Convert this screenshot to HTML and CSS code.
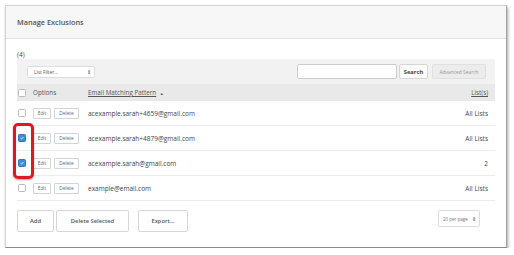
FILE: index.html
```html
<!DOCTYPE html>
<html>
<head>
<meta charset="utf-8">
<link rel="stylesheet" href="styles.css">
</head>
<body>
<div class="frame">
  <div class="head">Manage Exclusions</div>
  <div class="content">
    <div class="count">(4)</div>
    <div class="filterbar">
      <div class="select listfilter"><span>List Filter...</span><span class="arrows">&#8661;</span></div>
      <div class="spacer"></div>
      <div class="search-input"></div>
      <div class="btn search">Search</div>
      <div class="btn adv">Advanced Search</div>
    </div>
    <div class="row header">
      <div class="cb"></div>
      <div class="opts">Options</div>
      <div class="email"><span class="u">Email Matching Pattern</span> <span class="tri">&#9650;</span></div>
      <div class="lists"><span class="u">List(s)</span></div>
    </div>
    <div class="row">
      <div class="cb"></div>
      <div class="opts"><span class="sbtn edit">Edit</span><span class="sbtn">Delete</span></div>
      <div class="email">acexample.sarah+4659@gmail.com</div>
      <div class="lists">All Lists</div>
    </div>
    <div class="row">
      <div class="cb on"><svg viewBox="0 0 8 8"><path d="M2 4.2 L3.4 5.5 L6 2.6" fill="none" stroke="#fff" stroke-width="1.1"/></svg></div>
      <div class="opts"><span class="sbtn edit">Edit</span><span class="sbtn">Delete</span></div>
      <div class="email">acexample.sarah+4879@gmail.com</div>
      <div class="lists">All Lists</div>
    </div>
    <div class="row">
      <div class="cb on"><svg viewBox="0 0 8 8"><path d="M2 4.2 L3.4 5.5 L6 2.6" fill="none" stroke="#fff" stroke-width="1.1"/></svg></div>
      <div class="opts"><span class="sbtn edit">Edit</span><span class="sbtn">Delete</span></div>
      <div class="email">acexample.sarah@gmail.com</div>
      <div class="lists">2</div>
    </div>
    <div class="row">
      <div class="cb"></div>
      <div class="opts"><span class="sbtn edit">Edit</span><span class="sbtn">Delete</span></div>
      <div class="email">example@email.com</div>
      <div class="lists">All Lists</div>
    </div>
    <div class="actions">
      <div class="btn big add">Add</div>
      <div class="btn big del">Delete Selected</div>
      <div class="btn big exp">Export...</div>
      <div class="spacer"></div>
      <div class="select perpage"><span>20 per page</span><span class="arrows">&#8661;</span></div>
    </div>
  </div>
  <div class="highlight"></div>
</div>
</body>
</html>
```

FILE: styles.css
```css
html, body {
  margin: 0;
  padding: 0;
  background: #fff;
}
body {
  font-family: "Open Sans", "Noto Sans", sans-serif;
  color: #444;
}
.frame {
  position: relative;
  margin: 5px 0 0 5px;
  width: 500px;
  height: 241px;
  border: 1px solid #d4d4d4;
  border-right: 1px solid #9aa3ad;
  border-bottom: 1px solid #8a8a8a;
  box-shadow: 1px 2px 3px rgba(0,0,0,0.35);
  background: #fff;
}
.head {
  height: 32px;
  background: #f7f7f7;
  border-bottom: 1px solid #e2e2e2;
  display: flex;
  align-items: center;
  padding-left: 11px;
  font-size: 7.3px;
  font-weight: 600;
  color: #555;
}
.content {
  padding: 0 11px;
}
.count {
  height: 20px;
  display: flex;
  align-items: flex-end;
  font-size: 6.5px;
  color: #4a4a4a;
  box-sizing: border-box;
}
.filterbar {
  height: 25px;
  background: #f2f2f2;
  display: flex;
  align-items: center;
  padding: 0 9px 0 10px;
}
.spacer { flex: 1; }
.select {
  display: flex;
  align-items: center;
  justify-content: space-between;
  background: #fff;
  border: 1px solid #ddd;
  border-radius: 2px;
  box-sizing: border-box;
  font-size: 4.8px;
  color: #555;
}
.arrows { font-size: 5px; color: #333; }
.listfilter {
  width: 68px;
  height: 12px;
  padding: 0 3px 0 6px;
}
.search-input {
  width: 100px;
  height: 15px;
  background: #fff;
  border: 1px solid #ccc;
  border-radius: 2px;
  box-sizing: border-box;
  margin-right: 2px;
}
.btn {
  display: flex;
  align-items: center;
  justify-content: center;
  box-sizing: border-box;
  border: 1px solid #d6d6d6;
  border-radius: 2px;
  background: #fff;
}
.search {
  width: 29px;
  height: 15px;
  font-size: 5.8px;
  font-weight: 700;
  color: #444;
  margin-right: 4px;
}
.adv {
  width: 54px;
  height: 15px;
  font-size: 4.9px;
  color: #999;
  background: #ececec;
  border-color: #e0e0e0;
}
.row {
  display: flex;
  align-items: center;
  height: 25px;
  box-sizing: border-box;
  border-bottom: 1px solid #ececec;
  font-size: 6.5px;
  color: #444;
}
.row.header {
  height: 17px;
  background: #e9e9e9;
  border-bottom: none;
  font-size: 6.3px;
  color: #555;
}
.cb {
  width: 6px;
  height: 6px;
  border: 1px solid #bbb;
  border-radius: 1.5px;
  background: #fff;
  margin-left: 1px;
  margin-right: 7px;
  flex: none;
}
.cb svg { display: block; width: 100%; height: 100%; }
.cb.on {
  background: #3c8ddb;
  border-color: #2e78c2;
}
.opts {
  width: 55px;
  display: flex;
  gap: 3px;
  flex: none;
}
.sbtn {
  display: inline-flex;
  align-items: center;
  justify-content: center;
  height: 11px;
  padding: 0 3px;
  border: 1px solid #d4d4d4;
  border-radius: 1px;
  font-size: 4.8px;
  color: #666;
  box-sizing: border-box;
}
.sbtn.edit { width: 18px; }
.sbtn:not(.edit) { width: 25px; }
.email { flex: 1; }
.u { text-decoration: underline; }
.tri { font-size: 4px; margin-left: 2px; color: #555; }
.lists { padding-right: 7px; text-align: right; }
.actions {
  display: flex;
  align-items: flex-start;
  padding-top: 9px;
}
.big {
  height: 22px;
  font-size: 5.8px;
  font-weight: 600;
  color: #555;
}
.add { width: 37px; margin-right: 2px; }
.del { width: 73px; margin-right: 9px; }
.exp { width: 50px; }
.perpage {
  width: 42px;
  height: 17px;
  padding: 0 3px 0 4px;
  font-size: 4.5px;
  color: #777;
  margin-right: 15px;
}
.highlight {
  position: absolute;
  left: 7px;
  top: 117px;
  width: 15px;
  height: 50px;
  border: 3px solid #e3151d;
  border-radius: 5px;
  box-shadow: 0 1px 2px rgba(0,0,0,0.35);
}
```
